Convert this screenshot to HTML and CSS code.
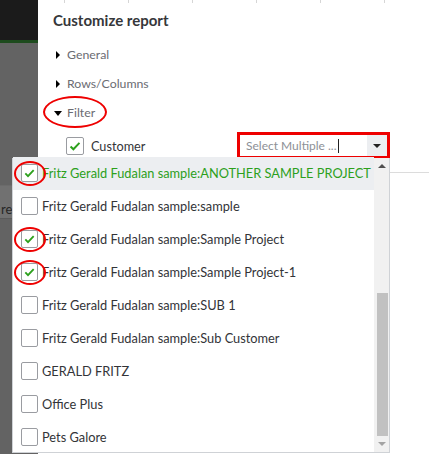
FILE: index.html
```html
<!DOCTYPE html>
<html lang="en">
<head>
    <meta charset="UTF-8">
    <meta name="viewport" content="width=device-width, initial-scale=1.0">
    <title>Customize report</title>
    <link rel="stylesheet" href="styles.css">
</head>
<body>
    <div class="screen">
        <!-- dimmed report behind the drawer -->
        <div class="backdrop">
            <div class="backdrop-top"></div>
            <div class="backdrop-body">
                <div class="backdrop-row">re</div>
            </div>
        </div>

        <div class="panel">
            <div class="ticks"></div>
            <h2 class="title">Customize report</h2>

            <ul class="sections">
                <li class="section"><span class="arrow-right"></span>General</li>
                <li class="section"><span class="arrow-right"></span>Rows/Columns</li>
                <li class="section open">
                    <span class="arrow-down"></span>Filter
                    <span class="mark mark-filter"></span>
                </li>
            </ul>

            <div class="filter-field">
                <div class="field-label">
                    <span class="checkbox checked">
                        <svg viewBox="0 0 18 18"><path d="M4 9.5l3.2 3.2L14 5.5"/></svg>
                    </span>
                    Customer
                </div>
                <div class="select">
                    <div class="select-input">Select Multiple ...<span class="caret"></span></div>
                    <div class="select-button"><span class="arrow-small"></span></div>
                </div>
            </div>

            <div class="divider"></div>
        </div>

        <!-- customer multi-select list -->
        <div class="dropdown">
            <ul class="options">
                <li class="option active">
                    <span class="checkbox checked">
                        <svg viewBox="0 0 18 18"><path d="M4 9.5l3.2 3.2L14 5.5"/></svg>
                    </span>
                    Fritz Gerald Fudalan sample:ANOTHER SAMPLE PROJECT
                    <span class="mark mark-box"></span>
                </li>
                <li class="option"><span class="checkbox"></span>Fritz Gerald Fudalan sample:sample</li>
                <li class="option">
                    <span class="checkbox checked">
                        <svg viewBox="0 0 18 18"><path d="M4 9.5l3.2 3.2L14 5.5"/></svg>
                    </span>
                    Fritz Gerald Fudalan sample:Sample Project
                    <span class="mark mark-box"></span>
                </li>
                <li class="option">
                    <span class="checkbox checked">
                        <svg viewBox="0 0 18 18"><path d="M4 9.5l3.2 3.2L14 5.5"/></svg>
                    </span>
                    Fritz Gerald Fudalan sample:Sample Project-1
                    <span class="mark mark-box"></span>
                </li>
                <li class="option"><span class="checkbox"></span>Fritz Gerald Fudalan sample:SUB 1</li>
                <li class="option"><span class="checkbox"></span>Fritz Gerald Fudalan sample:Sub Customer</li>
                <li class="option"><span class="checkbox"></span>GERALD FRITZ</li>
                <li class="option"><span class="checkbox"></span>Office Plus</li>
                <li class="option"><span class="checkbox"></span>Pets Galore</li>
            </ul>
            <div class="scrollbar">
                <div class="scroll-btn"><span class="scroll-up"></span></div>
                <div class="scroll-track"><div class="scroll-thumb"></div></div>
                <div class="scroll-btn"><span class="scroll-down"></span></div>
            </div>
        </div>
    </div>
</body>
</html>
```

FILE: styles.css
```css
body {
    margin: 0;
    font-family: Lato, "Open Sans", Arial, sans-serif;
    color: #393a3d;
    background-color: #fff;
}
ul {
    list-style: none;
    margin: 0;
    padding: 0;
}
.screen {
    position: relative;
    display: flex;
    width: 429px;
    height: 454px;
    overflow: hidden;
}

/* left strip */
.backdrop {
    width: 38px;
    display: flex;
    flex-direction: column;
    flex-shrink: 0;
}
.backdrop-top {
    height: 40px;
    background-color: #1b1b1b;
    border-bottom: 3px solid #1d4b1d;
}
.backdrop-body {
    flex: 1;
    background-color: #636363;
    padding-top: 142px;
}
.backdrop-row {
    height: 32px;
    line-height: 46px;
    padding-left: 1px;
    font-size: 13px;
    color: #262626;
    background-color: #717171;
    border-top: 1px solid #6b6b6b;
    border-bottom: 1px solid #5a5a5a;
}

/* drawer */
.panel {
    flex: 1;
    position: relative;
    padding-left: 15px;
}
.ticks {
    height: 3px;
    margin-left: -15px;
    background-image: repeating-linear-gradient(to right, transparent 0 26px, #d6d6d6 26px 27px, transparent 27px 64px);
}
.title {
    margin: 7px 0 0;
    font-size: 15px;
    line-height: 20px;
    font-weight: 700;
    color: #36373a;
}
.sections {
    margin-top: 10px;
}
.section {
    position: relative;
    display: flex;
    align-items: center;
    height: 29px;
    font-size: 12.3px;
    color: #6b6c72;
}
.arrow-right {
    width: 0;
    height: 0;
    margin: 0 7px 0 3px;
    border-left: 4px solid #000;
    border-top: 4px solid transparent;
    border-bottom: 4px solid transparent;
}
.arrow-down {
    width: 0;
    height: 0;
    margin: 1px 5px 0 1px;
    border-top: 5px solid #000;
    border-left: 4px solid transparent;
    border-right: 4px solid transparent;
}

/* red annotation rings */
.mark {
    position: absolute;
    border: 2.5px solid #ee0000;
    border-radius: 50%;
    box-sizing: border-box;
}
.mark-filter {
    left: -10px;
    top: -2px;
    width: 64px;
    height: 32px;
}
.mark-box {
    left: 1px;
    top: 4px;
    width: 32px;
    height: 25px;
}

.filter-field {
    display: flex;
    align-items: center;
    height: 27px;
    margin-top: 5px;
}
.field-label {
    display: flex;
    align-items: center;
    gap: 7px;
    width: 171px;
    padding-left: 13px;
    font-size: 12.7px;
    color: #333438;
}
.checkbox {
    display: flex;
    flex-shrink: 0;
    width: 18px;
    height: 18px;
    box-sizing: border-box;
    border: 1px solid #9a9ca1;
    border-radius: 2px;
    background-color: #fff;
}
.checkbox svg {
    width: 100%;
    height: 100%;
}
.checkbox path {
    fill: none;
    stroke: #2ca01c;
    stroke-width: 2.2;
}
.select {
    display: flex;
    width: 153px;
    height: 27px;
    box-sizing: border-box;
    border: 3px solid #ee0000;
}
.select-input {
    flex: 1;
    display: flex;
    align-items: center;
    padding-left: 6px;
    font-size: 12px;
    color: #8d9096;
}
.caret {
    width: 1px;
    height: 14px;
    margin-left: 1px;
    background-color: #222;
}
.select-button {
    width: 20px;
    display: flex;
    align-items: center;
    justify-content: center;
    background-color: #eceef1;
}
.arrow-small {
    width: 0;
    height: 0;
    border-top: 4px solid #222;
    border-left: 4px solid transparent;
    border-right: 4px solid transparent;
}
.divider {
    margin-top: 13px;
    margin-left: -15px;
    border-top: 1px solid #dcdcdc;
}

/* multi-select popup */
.dropdown {
    position: absolute;
    left: 12px;
    top: 158px;
    width: 378px;
    height: 295px;
    box-sizing: border-box;
    display: flex;
    background-color: #fff;
    border: 1px solid #cfd2d6;
    border-top: none;
}
.options {
    flex: 1;
    overflow: hidden;
    margin-top: -1px;
}
.option {
    position: relative;
    display: flex;
    align-items: center;
    gap: 4px;
    height: 32.9px;
    padding-left: 8px;
    font-size: 12.8px;
    color: #333438;
    white-space: nowrap;
}
.option .checkbox {
    width: 17px;
    height: 18px;
}
.option.active {
    background-color: #eceef1;
    color: #2ca01c;
}
.scrollbar {
    width: 15px;
    display: flex;
    flex-direction: column;
    background-color: #f1f1f1;
}
.scroll-btn {
    height: 17px;
    display: flex;
    align-items: center;
    justify-content: center;
}
.scroll-up {
    width: 0;
    height: 0;
    border-bottom: 4px solid #505050;
    border-left: 4px solid transparent;
    border-right: 4px solid transparent;
}
.scroll-down {
    width: 0;
    height: 0;
    border-top: 4px solid #a3a3a3;
    border-left: 4px solid transparent;
    border-right: 4px solid transparent;
}
.scroll-track {
    flex: 1;
    padding-top: 118px;
}
.scroll-thumb {
    height: 143px;
    margin: 0 1px 0 3px;
    background-color: #c1c1c1;
}
```
